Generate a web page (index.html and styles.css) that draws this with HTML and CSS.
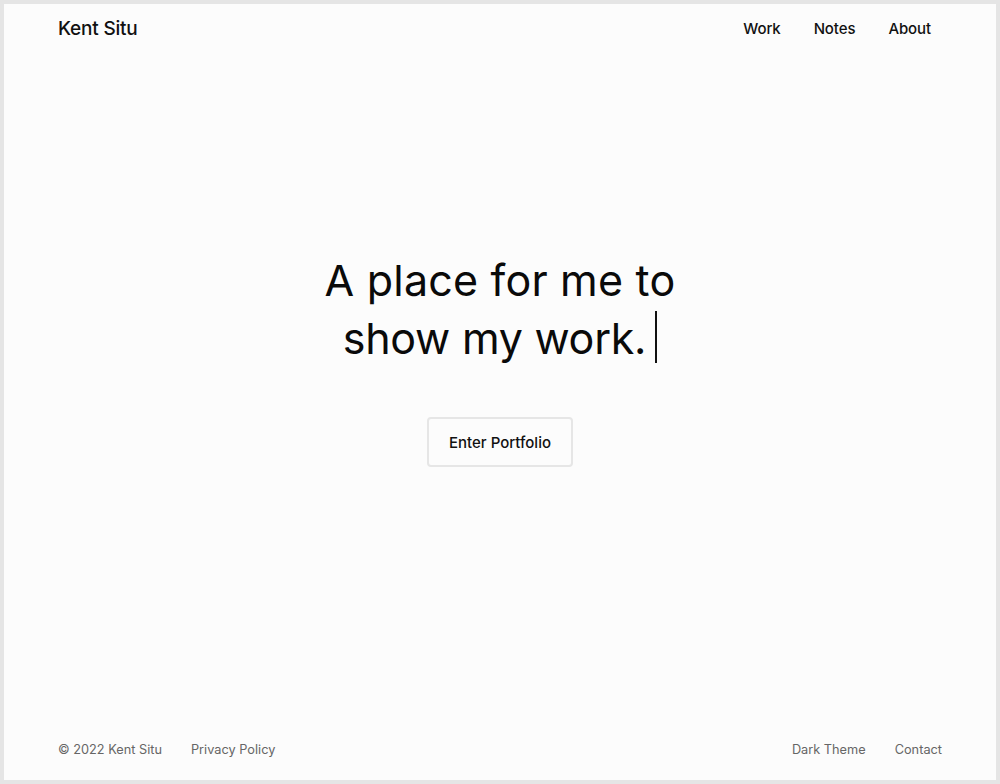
FILE: index.html
```html
<!DOCTYPE html>
<html lang="en">
<head>
<meta charset="utf-8">
<title>Kent Situ</title>
<link rel="stylesheet" href="styles.css">
</head>
<body>
<div class="page">
  <header class="header">
    <a class="brand" href="#">Kent Situ</a>
    <nav class="nav">
      <a href="#">Work</a>
      <a href="#">Notes</a>
      <a href="#">About</a>
    </nav>
  </header>
  <main class="hero">
    <h1 class="title">A place for me to<br><span class="line-two">show my work.</span><span class="caret"></span></h1>
    <a class="button" href="#">Enter Portfolio</a>
  </main>
  <footer class="footer">
    <div class="footer-group">
      <span>© 2022 Kent Situ</span>
      <a href="#">Privacy Policy</a>
    </div>
    <div class="footer-group">
      <a href="#">Dark Theme</a>
      <a href="#">Contact</a>
    </div>
  </footer>
</div>
</body>
</html>
```
FILE: styles.css
```css
* { box-sizing: border-box; }
html, body { margin: 0; padding: 0; }
body {
  background: #e5e5e5;
  padding: 4px;
  font-family: Inter, "Liberation Sans", sans-serif;
  color: #111;
}
a { color: inherit; text-decoration: none; }
.page {
  width: 992px;
  height: 776px;
  background: #fcfcfc;
  display: flex;
  flex-direction: column;
}
.header {
  display: flex;
  justify-content: space-between;
  align-items: center;
  height: 48px;
  padding: 0 65px 0 54px;
}
.brand {
  font-size: 19px;
  font-weight: 500;
  letter-spacing: -0.2px;
}
.nav {
  display: flex;
  gap: 33px;
  font-size: 15px;
  font-weight: 500;
  letter-spacing: -0.1px;
}
.hero {
  flex: 1;
  display: flex;
  flex-direction: column;
  align-items: center;
  justify-content: flex-start;
  padding-top: 199px;
}
.title {
  margin: 0;
  font-size: 43px;
  font-weight: 400;
  line-height: 58px;
  text-align: center;
  color: #0a0a0a;
  letter-spacing: 0.2px;
}
.line-two {
  letter-spacing: -0.25px;
}
.caret {
  display: inline-block;
  width: 2px;
  height: 52px;
  background: #111;
  vertical-align: -9px;
  margin-left: 9px;
}
.button {
  margin-top: 50px;
  width: 146px;
  height: 50px;
  border: 2px solid #e6e6e6;
  border-radius: 4px;
  display: flex;
  align-items: center;
  justify-content: center;
  font-size: 15px;
  font-weight: 500;
  color: #111;
}
.footer {
  display: flex;
  justify-content: space-between;
  align-items: center;
  height: 58px;
  padding: 0 54px 4px 54px;
  font-size: 12.75px;
  color: #666;
}
.footer-group {
  display: flex;
  gap: 29px;
}
```
